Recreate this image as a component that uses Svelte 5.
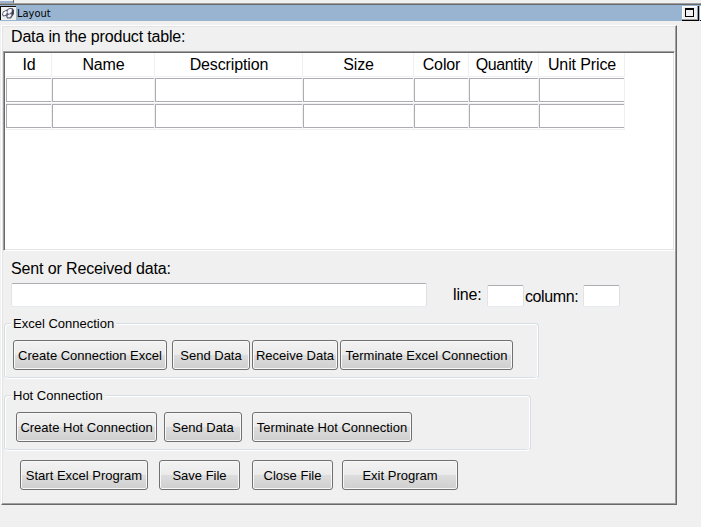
<script>
  const columns = [
    { name: 'Id', width: 46 },
    { name: 'Name', width: 103 },
    { name: 'Description', width: 148 },
    { name: 'Size', width: 111 },
    { name: 'Color', width: 55 },
    { name: 'Quantity', width: 70 },
    { name: 'Unit Price', width: 86 }
  ];
  const template = columns.map((c) => c.width + 'px').join(' ');
  const rows = [0, 1];
  const excelButtons = [
    { label: 'Create Connection Excel', width: 154, gap: 0 },
    { label: 'Send Data', width: 78, gap: 5 },
    { label: 'Receive Data', width: 86, gap: 2 },
    { label: 'Terminate Excel Connection', width: 173, gap: 2 }
  ];
  const hotButtons = [
    { label: 'Create Hot Connection', width: 141, gap: 0 },
    { label: 'Send Data', width: 78, gap: 7 },
    { label: 'Terminate Hot Connection', width: 160, gap: 10 }
  ];
  const fileButtons = [
    { label: 'Start Excel Program', width: 128, gap: 0 },
    { label: 'Save File', width: 81, gap: 11 },
    { label: 'Close File', width: 81, gap: 12 },
    { label: 'Exit Program', width: 116, gap: 9 }
  ];
</script>

{#snippet buttonRow(items)}
  <div class="buttons">
    {#each items as b}
      <button style="width:{b.width}px;margin-left:{b.gap}px">{b.label}</button>
    {/each}
  </div>
{/snippet}

<div class="window">
  <div class="edge"><span class="tab"></span></div>
  <header>
    <svg class="icon" width="16" height="16" viewBox="0 0 16 16" shape-rendering="crispEdges">
      <path d="M0 1h16v14H0z" fill="#f0f0f0" />
      <path d="M0 1h16v1H1v13H0z" fill="#111" />
      <g shape-rendering="auto">
        <path d="M7 4.500L9.500 3h3l1.500 2v4l-3 4.500H7L6 11 3 11.500 2 9.500 3 6.500z" fill="#5d5e78" />
        <path d="M8 5l2-1.200 2 .7-.5 2.500L9 9 7.300 7.500z" fill="#f4f4fa" />
        <path d="M3 9.500L3.500 7.500 6 5.700 7 7 6 9.500 4 10.500z" fill="#fff" />
        <path d="M7.300 11.500L8 10l2.500-1 1 1-1.500 2.200H8z" fill="#f4f4f4" />
        <path d="M12.500 4l1 1.500v3L12 10.500z" fill="#2f3048" />
      </g>
    </svg>
    <span class="title">Layout</span>
    <span class="max"><i></i></span>
    <span class="next"></span>
  </header>

  <main>
    <div class="label caption">Data in the product table:</div>
    <div class="table">
      <div class="head" style="grid-template-columns:{template}">
        {#each columns as c}<span>{c.name}</span>{/each}
      </div>
      {#each rows as r}
        <div class="row" style="grid-template-columns:{template}">
          {#each columns as c}<span><i></i></span>{/each}
        </div>
      {/each}
    </div>

    <div class="label sent">Sent or Received data:</div>
    <div class="inputs">
      <input class="data" aria-label="data" />
      <span class="label line">line:</span>
      <input class="num" aria-label="line" />
      <span class="label col">column:</span>
      <input class="num second" aria-label="column" />
    </div>

    <section class="group excel">
      <h2>Excel Connection</h2>
      {@render buttonRow(excelButtons)}
    </section>
    <section class="group hot">
      <h2>Hot Connection</h2>
      {@render buttonRow(hotButtons)}
    </section>
    <div class="files">{@render buttonRow(fileButtons)}</div>
  </main>
</div>

<style>
  :global(body) { margin: 0; background: #f0f0f0; }
  .window, .window * { box-sizing: border-box; }
  .window {
    width: 701px; height: 527px; overflow: hidden; background: #f0f0f0; color: #000;
    font-family: "Liberation Sans", Arial, sans-serif; font-size: 16px;
  }
  .edge { height: 5px; border-bottom: 1px solid #696969; box-shadow: inset 0 -1px #a0a0a0; display: flex; }
  .tab { width: 14px; height: 3px; background: linear-gradient(#f0f0f0 1px, #99b4d1 1px); border-right: 1px solid #696969; }
  header { height: 16px; background: #99b4d1; display: flex; align-items: flex-start; }
  .icon { display: block; flex: none; }
  .title {
    font: 11px/17px "DejaVu Sans Condensed", "DejaVu Sans", sans-serif;
    font-stretch: condensed; margin-left: 1px; flex: 1;
  }
  .max {
    width: 17px; height: 15px; margin: 1px 1px 0 0; background: #f0f0f0; padding: 2px 0 0 3px;
    border: solid; border-width: 0 1px 1px 0; border-color: #000; box-shadow: inset -1px -1px #a0a0a0, inset 1px 1px #fff;
  }
  .max i { display: block; width: 9px; height: 9px; border: 1px solid #000; border-top-width: 2px; }
  .next { width: 1px; height: 15px; margin-top: 1px; background: #fff; border-bottom: 1px solid #000; }
  main {
    width: 676px; height: 480px; margin: 4px 0 0 1px;
    border: 1px solid; border-color: #fff #696969 #696969 #fff;
    box-shadow: inset -1px -1px #a0a0a0, inset 1px 1px #e3e3e3;
    padding: 0 1px;
  }
  .label { line-height: 18px; white-space: nowrap; letter-spacing: -0.17px; }
  .caption { height: 25px; padding: 2px 0 0 8px; }
  .table {
    width: 672px; height: 200px; background: #fff;
    border: 1px solid; border-color: #a0a0a0 #fff #fff #a0a0a0;
    box-shadow: inset 1px 1px #696969, inset -1px -1px #e3e3e3;
    padding: 1px 1px 1px 2px;
  }
  .head { display: grid; height: 25px; }
  .head span {
    height: 24px; border: solid #f0f0f0; border-width: 0 1px 1px 0;
    text-align: center; line-height: 24px; white-space: nowrap; letter-spacing: -0.12px;
    padding-left: 1px;
  }
  .head span:nth-child(6) { letter-spacing: -0.4px; }
  .row { display: grid; height: 26px; }
  .row span { height: 26px; border: solid #f0f0f0; border-width: 0 1px 1px 0; }
  .row i { display: block; height: 24px; border: 1px solid #abadb3; border-right: 0; }
  .sent { height: 32px; padding: 9px 0 0 8px; letter-spacing: -0.13px; }
  .inputs { display: flex; align-items: flex-start; height: 32px; padding-left: 8px; }
  input {
    display: block; flex: none; margin: 0; padding: 0; outline: 0; background: #fff; border: 1px solid;
    border-color: #abadb3 #dbdfe6 #e3e9ef #e2e3ea; border-radius: 2px;
  }
  .data { width: 416px; height: 24px; }
  .line { width: 60px; padding: 3px 0 0 26px; }
  .num { width: 37px; height: 22px; margin-top: 2px; }
  .col { width: 59px; padding: 5px 0 0 1px; letter-spacing: -0.4px; }
  .group {
    height: 56px; margin-left: 1px; border: 1px solid #d5dfe5; border-bottom-color: #fff; border-radius: 4px;
    box-shadow: inset 1px 1px #fff, inset -1px 0 #fff, inset 0 -1px #d5dfe5;
  }
  .excel { width: 535px; margin-top: 8px; padding-left: 8px; }
  .hot { width: 527px; margin-top: 16px; padding-left: 11px; }
  h2 {
    position: relative; top: -9px; width: max-content; height: 16px; margin: 0 0 0 -2px; padding: 0 2px;
    background: #f0f0f0; font-size: 13px; font-weight: 400; line-height: 18px;
  }
  .hot h2 { margin-left: -5px; }
  .buttons { display: flex; }
  button {
    flex: none; height: 30px; padding: 1px 0 0; margin: 0; border: 1px solid #707070; border-radius: 3px;
    box-shadow: inset 0 0 0 1px #f8f8f8;
    background: linear-gradient(#f2f2f2, #ebebeb 48%, #dddddd 50%, #cfcfcf);
    font: 13px "Liberation Sans", Arial, sans-serif; color: #000; white-space: nowrap;
  }
  .files { padding: 9px 0 0 17px; }
</style>
